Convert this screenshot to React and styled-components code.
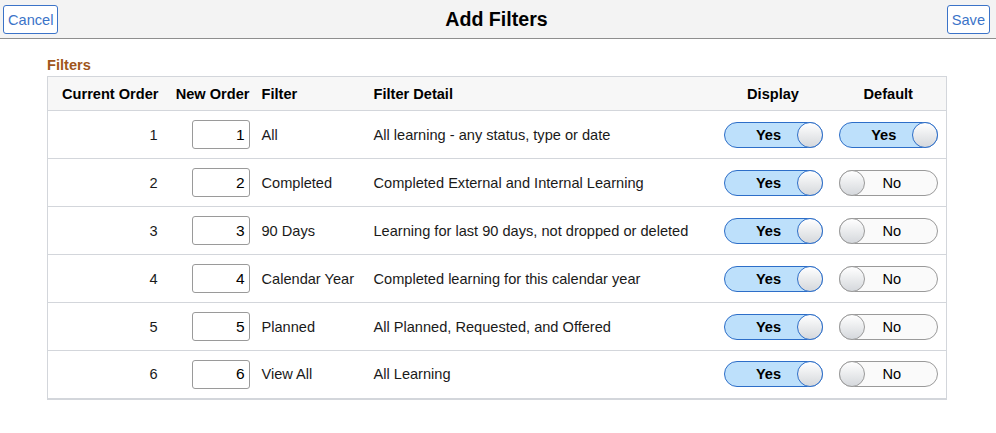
import React from "react";
import styled, { createGlobalStyle } from "styled-components";

const GlobalStyle = createGlobalStyle`
  body {
    margin: 0;
    background: #fff;
    font-family: "Liberation Sans", Arial, sans-serif;
    color: #000;
  }
`;

const TopBar = styled.header`
  height: 38px;
  background: #f3f3f3;
  border-bottom: 1px solid #8e8e8e;
  display: grid;
  grid-template-columns: 1fr auto 1fr;
  align-items: center;
  padding: 0 6px 0 3px;
`;

const BarButton = styled.button`
  justify-self: ${(p) => (p.$end ? "end" : "start")};
  height: 29px;
  padding: 0 4px;
  background: #fff;
  border: 1px solid #3b73c8;
  border-radius: 3px;
  color: #3b73c8;
  font-family: "Liberation Sans", Arial, sans-serif;
  font-size: 14.6px;
  margin-top: 1px;
`;

const Title = styled.h1`
  margin: 0;
  font-size: 19.6px;
  font-weight: bold;
  color: #000;
`;

const Content = styled.main`
  padding: 18px 50px 0 47px;
`;

const SectionLabel = styled.div`
  color: #a0561c;
  font-size: 14.6px;
  font-weight: bold;
  margin-bottom: 3px;
`;

const Table = styled.table`
  width: 899px;
  border-collapse: collapse;
  table-layout: fixed;
  border: 1px solid #d3d6db;
  border-bottom: 2px solid #d3d6db;
  font-size: 14.6px;
`;

const HeadRow = styled.tr`
  background: #f7f7f7;
  height: 34px;
`;

const Th = styled.th`
  font-weight: bold;
  padding: 0 ${(p) => p.$pr || 0}px 0 ${(p) => p.$pl || 0}px;
  text-align: ${(p) => p.$align || "left"};
  border-bottom: 1px solid #d3d6db;
  white-space: nowrap;
`;

const Row = styled.tr`
  height: 48px;
  & + & td {
    border-top: 1px solid #d3d6db;
  }
`;

const Td = styled.td`
  padding: 0 ${(p) => p.$pr || 0}px 0 ${(p) => p.$pl || 0}px;
  text-align: ${(p) => p.$align || "left"};
  vertical-align: middle;
  white-space: nowrap;
  color: #1a1a1a;
`;

const OrderInput = styled.input`
  box-sizing: border-box;
  width: 58px;
  height: 29px;
  border: 1px solid #9a9a9a;
  border-radius: 3px;
  text-align: right;
  padding: 0 4px;
  font-family: "Liberation Sans", Arial, sans-serif;
  font-size: 15.5px;
  color: #000;
  vertical-align: middle;
`;

const Switch = styled.span`
  box-sizing: border-box;
  display: inline-flex;
  align-items: center;
  flex-direction: ${(p) => (p.$on ? "row" : "row-reverse")};
  width: 99px;
  height: 26px;
  border-radius: 13px;
  border: 1px solid ${(p) => (p.$on ? "#2d6ec8" : "#9a9a9a")};
  background: ${(p) => (p.$on ? "#bde0fb" : "#fafafa")};
  vertical-align: middle;
`;

const SwitchText = styled.span`
  flex: 1;
  text-align: center;
  font-size: 14.6px;
  font-weight: ${(p) => (p.$on ? "bold" : "normal")};
  color: #000;
  padding: ${(p) => (p.$on ? "0 0 0 16px" : "0 18px 0 0")};
`;

const Knob = styled.span`
  box-sizing: border-box;
  width: 26px;
  height: 26px;
  margin: ${(p) => (p.$on ? "0 -1px 0 0" : "0 0 0 -1px")};
  border-radius: 50%;
  border: 1px solid ${(p) => (p.$on ? "#2d6ec8" : "#9a9a9a")};
  background: linear-gradient(#ffffff, #d5d8dc);
`;

const Toggle = ({ on }) => (
  <Switch $on={on}>
    <SwitchText $on={on}>{on ? "Yes" : "No"}</SwitchText>
    <Knob $on={on} />
  </Switch>
);

const filters = [
  { name: "All", detail: "All learning - any status, type or date", def: true },
  { name: "Completed", detail: "Completed External and Internal Learning" },
  { name: "90 Days", detail: "Learning for last 90 days, not dropped or deleted" },
  { name: "Calendar Year", detail: "Completed learning for this calendar year" },
  { name: "Planned", detail: "All Planned, Requested, and Offered" },
  { name: "View All", detail: "All Learning" },
];

export default function App() {
  return (
    <>
      <GlobalStyle />
      <TopBar>
        <BarButton>Cancel</BarButton>
        <Title>Add Filters</Title>
        <BarButton $end>Save</BarButton>
      </TopBar>
      <Content>
        <SectionLabel>Filters</SectionLabel>
        <Table>
          <colgroup>
            <col style={{ width: 121 }} />
            <col style={{ width: 88 }} />
            <col style={{ width: 112 }} />
            <col style={{ width: 347 }} />
            <col style={{ width: 115 }} />
            <col style={{ width: 116 }} />
          </colgroup>
          <thead>
            <HeadRow>
              <Th $align="right" $pr={10}>Current Order</Th>
              <Th $align="right" $pr={7}>New Order</Th>
              <Th $pl={5}>Filter</Th>
              <Th $pl={5}>Filter Detail</Th>
              <Th $align="center">Display</Th>
              <Th $align="center">Default</Th>
            </HeadRow>
          </thead>
          <tbody>
            {filters.map((f, i) => (
              <Row key={f.name}>
                <Td $align="right" $pr={11}>{i + 1}</Td>
                <Td $align="right" $pr={7}>
                  <OrderInput defaultValue={i + 1} />
                </Td>
                <Td $pl={5}>{f.name}</Td>
                <Td $pl={5}>{f.detail}</Td>
                <Td $align="center">
                  <Toggle on />
                </Td>
                <Td $align="center">
                  <Toggle on={!!f.def} />
                </Td>
              </Row>
            ))}
          </tbody>
        </Table>
      </Content>
    </>
  );
}
